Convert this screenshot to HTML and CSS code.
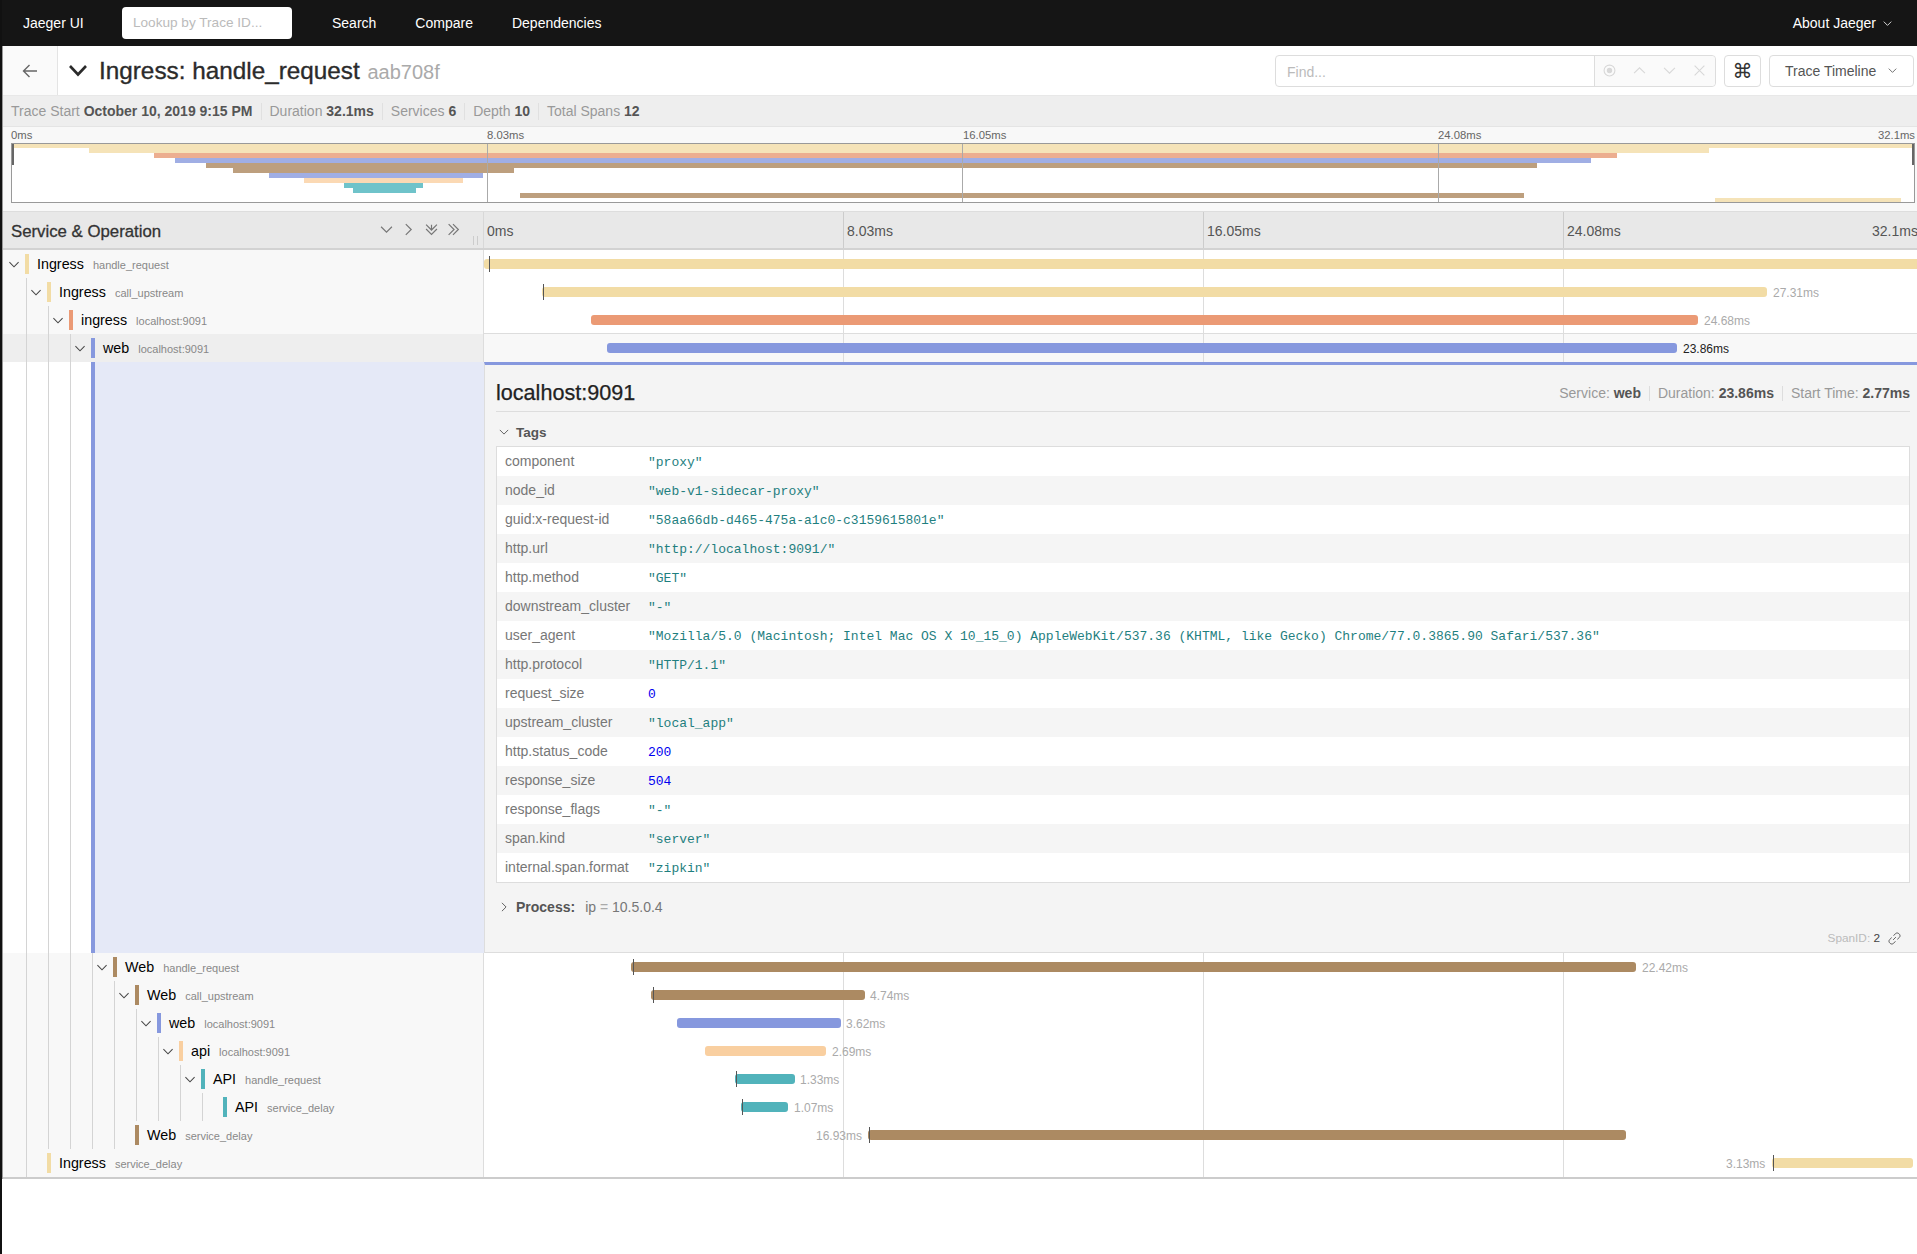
FILE: index.html
```html
<!DOCTYPE html>
<html lang="en">
<head>
<meta charset="utf-8">
<title>Jaeger UI</title>
<link rel="stylesheet" href="styles.css">
</head>
<body>
<svg class="defs" aria-hidden="true">
  <symbol id="down" viewBox="0 0 12 12"><path d="M1 3.500l5 5 5-5"/></symbol>
  <symbol id="right" viewBox="0 0 12 12"><path d="M3.500 1l5 5-5 5"/></symbol>
  <symbol id="up" viewBox="0 0 12 12"><path d="M1 8.500l5-5 5 5"/></symbol>
  <symbol id="ddown" viewBox="0 0 12 12"><path d="M1 1.500l5 5 5-5M1 5.500l5 5 5-5M6 6.500v-5"/></symbol>
  <symbol id="dright" viewBox="0 0 12 12"><path d="M1.500 1l5 5-5 5M5.500 1l5 5-5 5"/></symbol>
</svg>
<div class="app">
  <nav class="nav">
    <span class="brand">Jaeger UI</span>
    <div class="lookup">Lookup by Trace ID...</div>
    <a class="nav-link">Search</a>
    <a class="nav-link">Compare</a>
    <a class="nav-link">Dependencies</a>
    <a class="nav-link about">About Jaeger <svg class="ic ic-xs"><use href="#down"/></svg></a>
  </nav>
  <main class="main">
    <header class="trace-head">
      <div class="back"><svg class="back-ic" viewBox="0 0 16 14"><path d="M15 7H1.500M7.500 1l-6 6 6 6"/></svg></div>
      <svg class="title-chev" viewBox="0 0 20 13"><path d="M2 2l8 8.500 8-8.500"/></svg>
      <h1 class="title">Ingress: handle_request <small class="trace-id">aab708f</small></h1>
      <div class="find">
        <div class="find-input">Find...</div>
        <div class="find-btns">
          <svg class="find-ic" viewBox="0 0 12 12"><circle cx="6" cy="6" r="5"/><circle class="dot" cx="6" cy="6" r="2"/></svg>
          <svg class="find-ic"><use href="#up"/></svg>
          <svg class="find-ic"><use href="#down"/></svg>
          <svg class="find-ic" viewBox="0 0 12 12"><path d="M1.500 1.500l9 9M10.500 1.500l-9 9"/></svg>
        </div>
      </div>
      <div class="cmd">⌘</div>
      <div class="view-select">Trace Timeline <svg class="ic ic-xs"><use href="#down"/></svg></div>
    </header>

    <div class="meta">
      <span class="meta-item">Trace Start <b>October 10, 2019 9:15 PM</b></span>
      <span class="meta-item">Duration <b>32.1ms</b></span>
      <span class="meta-item">Services <b>6</b></span>
      <span class="meta-item">Depth <b>10</b></span>
      <span class="meta-item">Total Spans <b>12</b></span>
    </div>

    <section class="mini">
      <div class="mini-labels"><span>0ms</span><span class="ml1">8.03ms</span><span class="ml2">16.05ms</span><span class="ml3">24.08ms</span><span class="ml4">32.1ms</span></div>
      <div class="mini-canvas">
        <i class="mb m-yellow" style="top:0;left:2px;width:1900px"></i>
        <i class="mb m-yellow" style="top:5px;left:77px;width:1620px"></i>
        <i class="mb m-salmon" style="top:10px;left:142px;width:1463px"></i>
        <i class="mb m-blue" style="top:15px;left:163px;width:1416px"></i>
        <i class="mb m-brown" style="top:20px;left:194px;width:1331px"></i>
        <i class="mb m-brown" style="top:25px;left:221px;width:281px"></i>
        <i class="mb m-blue" style="top:30px;left:257px;width:214px"></i>
        <i class="mb m-peach" style="top:35px;left:292px;width:159px"></i>
        <i class="mb m-teal" style="top:40px;left:332px;width:79px"></i>
        <i class="mb m-teal" style="top:45px;left:341px;width:63px"></i>
        <i class="mb m-brown" style="top:50px;left:508px;width:1004px"></i>
        <i class="mb m-yellow" style="top:55px;left:1703px;width:186px"></i>
        <i class="handle handle-l"></i><i class="handle handle-r"></i>
      </div>
    </section>

    <section class="spans">
      <div class="row head">
        <div class="head-left">
          <span class="head-title">Service &amp; Operation</span>
          <div class="head-tools">
            <svg class="ic ic-tool"><use href="#down"/></svg>
            <svg class="ic ic-tool"><use href="#right"/></svg>
            <svg class="ic ic-tool"><use href="#ddown"/></svg>
            <svg class="ic ic-tool"><use href="#dright"/></svg>
          </div>
          <i class="grip"></i>
        </div>
        <div class="head-time"><span>0ms</span><span>8.03ms</span><span>16.05ms</span><span>24.08ms</span><span class="last">32.1ms</span></div>
      </div>

      <div class="row">
        <div class="name"><svg class="ic toggle"><use href="#down"/></svg><i class="color c-yellow"></i><span class="svc">Ingress</span><span class="op">handle_request</span></div>
        <div class="tl"><i class="bar c-yellow" style="left:0;width:1500px"></i><i class="mark" style="left:5px"></i></div>
      </div>
      <div class="row">
        <div class="name"><i class="guide"></i><svg class="ic toggle"><use href="#down"/></svg><i class="color c-yellow"></i><span class="svc">Ingress</span><span class="op">call_upstream</span></div>
        <div class="tl"><i class="bar c-yellow" style="left:58px;width:1225px"></i><i class="mark" style="left:59px"></i><span class="dur" style="left:1289px">27.31ms</span></div>
      </div>
      <div class="row">
        <div class="name"><i class="guide"></i><i class="guide"></i><svg class="ic toggle"><use href="#down"/></svg><i class="color c-salmon"></i><span class="svc">ingress</span><span class="op">localhost:9091</span></div>
        <div class="tl"><i class="bar c-salmon" style="left:107px;width:1107px"></i><span class="dur" style="left:1220px">24.68ms</span></div>
      </div>
      <div class="row active">
        <div class="name"><i class="guide"></i><i class="guide"></i><i class="guide"></i><svg class="ic toggle"><use href="#down"/></svg><i class="color c-blue"></i><span class="svc">web</span><span class="op">localhost:9091</span></div>
        <div class="tl"><i class="bar c-blue" style="left:123px;width:1070px"></i><span class="dur" style="left:1199px">23.86ms</span></div>
      </div>

      <div class="row detail-row">
        <div class="name detail-left"><i class="guide"></i><i class="guide"></i><i class="guide"></i><i class="no-toggle"></i><i class="detail-fill"></i></div>
        <div class="detail">
          <div class="detail-head">
            <h2 class="detail-title">localhost:9091</h2>
            <div class="detail-meta">
              <span class="dm">Service: <b>web</b></span>
              <span class="dm">Duration: <b>23.86ms</b></span>
              <span class="dm">Start Time: <b>2.77ms</b></span>
            </div>
          </div>
          <div class="tags-head"><svg class="ic ic-sm"><use href="#down"/></svg><b>Tags</b></div>
          <div class="tags">
            <div class="tag"><span class="k">component</span><span class="v">"proxy"</span></div>
            <div class="tag"><span class="k">node_id</span><span class="v">"web-v1-sidecar-proxy"</span></div>
            <div class="tag"><span class="k">guid:x-request-id</span><span class="v">"58aa66db-d465-475a-a1c0-c3159615801e"</span></div>
            <div class="tag"><span class="k">http.url</span><span class="v">"http://localhost:9091/"</span></div>
            <div class="tag"><span class="k">http.method</span><span class="v">"GET"</span></div>
            <div class="tag"><span class="k">downstream_cluster</span><span class="v">"-"</span></div>
            <div class="tag"><span class="k">user_agent</span><span class="v">"Mozilla/5.0 (Macintosh; Intel Mac OS X 10_15_0) AppleWebKit/537.36 (KHTML, like Gecko) Chrome/77.0.3865.90 Safari/537.36"</span></div>
            <div class="tag"><span class="k">http.protocol</span><span class="v">"HTTP/1.1"</span></div>
            <div class="tag"><span class="k">request_size</span><span class="v num">0</span></div>
            <div class="tag"><span class="k">upstream_cluster</span><span class="v">"local_app"</span></div>
            <div class="tag"><span class="k">http.status_code</span><span class="v num">200</span></div>
            <div class="tag"><span class="k">response_size</span><span class="v num">504</span></div>
            <div class="tag"><span class="k">response_flags</span><span class="v">"-"</span></div>
            <div class="tag"><span class="k">span.kind</span><span class="v">"server"</span></div>
            <div class="tag"><span class="k">internal.span.format</span><span class="v">"zipkin"</span></div>
          </div>
          <div class="process"><svg class="ic ic-sm"><use href="#right"/></svg><b>Process:</b><span class="proc-kv">ip<em> = </em>10.5.0.4</span></div>
          <div class="span-id">SpanID: <span class="sid">2</span>
            <svg class="link-ic" viewBox="0 0 14 14"><path d="M5.500 8.500l3-3M6 4l2-2.200c1-1 2.700-1 3.600-.1l.7.700c.9.900.9 2.500-.1 3.500l-2.200 2M8 10l-2 2.200c-1 1-2.700 1-3.600.1l-.7-.7c-.9-.9-.9-2.500.1-3.500L4 6"/></svg>
          </div>
        </div>
      </div>

      <div class="row">
        <div class="name"><i class="guide"></i><i class="guide"></i><i class="guide"></i><i class="guide"></i><svg class="ic toggle"><use href="#down"/></svg><i class="color c-brown"></i><span class="svc">Web</span><span class="op">handle_request</span></div>
        <div class="tl"><i class="bar c-brown" style="left:147px;width:1005px"></i><i class="mark" style="left:149px"></i><span class="dur" style="left:1158px">22.42ms</span></div>
      </div>
      <div class="row">
        <div class="name"><i class="guide"></i><i class="guide"></i><i class="guide"></i><i class="guide"></i><i class="guide"></i><svg class="ic toggle"><use href="#down"/></svg><i class="color c-brown"></i><span class="svc">Web</span><span class="op">call_upstream</span></div>
        <div class="tl"><i class="bar c-brown" style="left:167px;width:214px"></i><i class="mark" style="left:169px"></i><span class="dur" style="left:386px">4.74ms</span></div>
      </div>
      <div class="row">
        <div class="name"><i class="guide"></i><i class="guide"></i><i class="guide"></i><i class="guide"></i><i class="guide"></i><i class="guide"></i><svg class="ic toggle"><use href="#down"/></svg><i class="color c-blue"></i><span class="svc">web</span><span class="op">localhost:9091</span></div>
        <div class="tl"><i class="bar c-blue" style="left:193px;width:164px"></i><span class="dur" style="left:362px">3.62ms</span></div>
      </div>
      <div class="row">
        <div class="name"><i class="guide"></i><i class="guide"></i><i class="guide"></i><i class="guide"></i><i class="guide"></i><i class="guide"></i><i class="guide"></i><svg class="ic toggle"><use href="#down"/></svg><i class="color c-peach"></i><span class="svc">api</span><span class="op">localhost:9091</span></div>
        <div class="tl"><i class="bar c-peach" style="left:221px;width:121px"></i><span class="dur" style="left:348px">2.69ms</span></div>
      </div>
      <div class="row">
        <div class="name"><i class="guide"></i><i class="guide"></i><i class="guide"></i><i class="guide"></i><i class="guide"></i><i class="guide"></i><i class="guide"></i><i class="guide"></i><svg class="ic toggle"><use href="#down"/></svg><i class="color c-teal"></i><span class="svc">API</span><span class="op">handle_request</span></div>
        <div class="tl"><i class="bar c-teal" style="left:251px;width:60px"></i><i class="mark" style="left:252px"></i><span class="dur" style="left:316px">1.33ms</span></div>
      </div>
      <div class="row">
        <div class="name"><i class="guide"></i><i class="guide"></i><i class="guide"></i><i class="guide"></i><i class="guide"></i><i class="guide"></i><i class="guide"></i><i class="guide"></i><i class="guide"></i><i class="no-toggle"></i><i class="color c-teal"></i><span class="svc">API</span><span class="op">service_delay</span></div>
        <div class="tl"><i class="bar c-teal" style="left:257px;width:47px"></i><i class="mark" style="left:258px"></i><span class="dur" style="left:310px">1.07ms</span></div>
      </div>
      <div class="row">
        <div class="name"><i class="guide"></i><i class="guide"></i><i class="guide"></i><i class="guide"></i><i class="guide"></i><i class="no-toggle"></i><i class="color c-brown"></i><span class="svc">Web</span><span class="op">service_delay</span></div>
        <div class="tl"><i class="bar c-brown" style="left:384px;width:758px"></i><i class="mark" style="left:385px"></i><span class="dur" style="left:332px">16.93ms</span></div>
      </div>
      <div class="row last-row">
        <div class="name"><i class="guide"></i><i class="no-toggle"></i><i class="color c-yellow"></i><span class="svc">Ingress</span><span class="op">service_delay</span></div>
        <div class="tl"><i class="bar c-yellow" style="left:1288px;width:141px"></i><i class="mark" style="left:1289px"></i><span class="dur" style="left:1242px">3.13ms</span></div>
      </div>
    </section>
  </main>
</div>
</body>
</html>
```
FILE: styles.css
```css
* { box-sizing: border-box; }
html, body { margin: 0; padding: 0; }
body {
  width: 1917px;
  height: 1254px;
  overflow: hidden;
  background: #fff;
  color: #333;
  font-family: "Liberation Sans", Arial, sans-serif;
  font-size: 14px;
}
.defs { position: absolute; width: 0; height: 0; }
svg { fill: none; stroke: currentColor; flex: none; }
i { display: block; font-style: normal; }

.app { border-left: 2px solid #111; height: 1254px; }

/* top nav */
.nav {
  display: flex;
  align-items: center;
  height: 46px;
  background: #151515;
  color: #fff;
  padding-left: 21px;
}
.brand { width: 99px; }
.lookup {
  width: 170px;
  height: 32px;
  margin-right: 40px;
  padding-left: 11px;
  line-height: 32px;
  font-size: 13.600px;
  background: #fff;
  border-radius: 4px;
  color: #bbb;
}
.nav-link { margin-right: 39px; }
.nav-link.about { margin-left: auto; margin-right: 25px; display: flex; align-items: center; gap: 7px; }

.main { border-left: 1px solid #999; }

/* trace header */
.trace-head {
  display: flex;
  align-items: center;
  height: 50px;
  border-bottom: 1px solid #e8e8e8;
  padding-right: 3px;
}
.back {
  width: 55px;
  height: 100%;
  display: flex;
  align-items: center;
  justify-content: center;
  background: #fafafa;
  border-right: 1px solid #e4e4e4;
  color: #666;
}
.back-ic { width: 16px; height: 14px; stroke-width: 1.400; }
.title-chev { width: 20px; height: 13px; margin-left: 10px; stroke: #2b2b2b; stroke-width: 2.600; }
.title {
  margin: 0 0 0 11px;
  font-size: 24.300px;
  font-weight: 400;
  color: #2b2b2b;
  -webkit-text-stroke: 0.350px #2b2b2b;
  white-space: nowrap;
}
.trace-id { font-size: 20px; color: #aaa; -webkit-text-stroke: 0; margin-left: 1px; }
.find { margin-left: auto; display: flex; height: 32px; border: 1px solid #ddd; border-radius: 4px; width: 441px; }
.find-input { width: 319px; padding-left: 11px; line-height: 32px; color: #bbb; border-right: 1px solid #ddd; }
.find-btns { flex: 1; display: flex; align-items: center; justify-content: space-between; padding: 0 9px 0 8px; background: #fafafa; border-radius: 0 4px 4px 0; color: #d8d8d8; }
.find-ic { width: 13px; height: 13px; }
.dot { fill: currentColor; }
.cmd {
  width: 37px;
  height: 32px;
  margin-left: 8px;
  border: 1px solid #ddd;
  border-radius: 4px;
  text-align: center;
  font: 20px/30px "DejaVu Sans", sans-serif;
  color: #333;
}
.view-select {
  width: 145px;
  height: 32px;
  margin-left: 8px;
  padding-left: 15px;
  display: flex;
  align-items: center;
  gap: 12px;
  border: 1px solid #ddd;
  border-radius: 4px;
  color: #555;
}
.ic { width: 12px; height: 12px; stroke-width: 1.100; }
.ic-xs { width: 9px; height: 9px; color: inherit; }

/* meta bar */
.meta {
  display: flex;
  align-items: center;
  height: 31px;
  padding-left: 8px;
  background: #eee;
  border-bottom: 1px solid #e4e4e4;
  color: #999;
  font-size: 14px;
}
.meta-item { padding-right: 8px; margin-right: 8px; border-right: 1px solid #e0e0e0; line-height: 17px; }
.meta-item:last-child { border: 0; }
.meta b { color: #555; }

/* minimap */
.mini {
  height: 85px;
  background: #f8f8f8;
  border-bottom: 1px solid #ddd;
  padding: 0 0 0 8px;
}
.mini-labels { position: relative; width: 1903px; height: 16px; font-size: 11.300px; line-height: 16px; color: #666; }
.mini-labels span { position: absolute; left: 0; top: 0; }
.mini-labels .ml1 { left: 476px; }
.mini-labels .ml2 { left: 952px; }
.mini-labels .ml3 { left: 1427px; }
.mini-labels .ml4 { left: auto; right: -1px; }
.mini-canvas {
  position: relative;
  width: 1904px;
  height: 60px;
  background: #fff;
  border: 1px solid #999;
  overflow: hidden;
}
.mini-canvas::after {
  content: "";
  position: absolute;
  inset: 0;
  background:
    linear-gradient(#aaa, #aaa) 475px 0 / 1px 100% no-repeat,
    linear-gradient(#aaa, #aaa) 950px 0 / 1px 100% no-repeat,
    linear-gradient(#aaa, #aaa) 1426px 0 / 1px 100% no-repeat;
}
.mb { position: absolute; height: 5px; margin-top: -1px; }
.m-yellow { background: #f5e3b8; }
.m-salmon { background: #ecae90; }
.m-blue { background: #a0aee4; }
.m-brown { background: #bd9f7e; }
.m-peach { background: #fbd9b4; }
.m-teal { background: #6fc3ca; }
.handle { position: absolute; top: 0; width: 3px; height: 21px; background: #666; z-index: 1; }
.handle-l { left: -1px; }
.handle-r { right: -1px; }

/* span table */
.spans { border-bottom: 2px solid #ccc; }
.row { display: grid; grid-template-columns: 481px 1fr; height: 28px; }
.head { height: 38px; background: #e8e8e8; border-bottom: 2px solid #d2d2d2; }
.head-left {
  position: relative;
  display: flex;
  align-items: center;
  padding-left: 8px;
  padding-top: 4px;
  border-right: 1px solid #d8d8d8;
}
.head-title { font-size: 16.800px; color: #333; -webkit-text-stroke: 0.300px #333; white-space: nowrap; }
.head-tools { margin-left: auto; margin-right: 23px; margin-top: -5px; display: flex; gap: 9.400px; color: #777; }
.ic-tool { width: 13px; height: 13px; }
.grip { position: absolute; right: 5px; bottom: 3px; width: 5px; height: 9px; border-left: 1px solid #ccc; border-right: 1px solid #ccc; }
.head-time {
  display: grid;
  grid-template-columns: 360px 360px 360px 308px auto;
  color: #555;
  line-height: 38px;
  width: 1433px;
  overflow: hidden;
  background:
    linear-gradient(#ccc, #ccc) 359px 0 / 1px 100% no-repeat,
    linear-gradient(#ccc, #ccc) 719px 0 / 1px 100% no-repeat,
    linear-gradient(#ccc, #ccc) 1079px 0 / 1px 100% no-repeat;
}
.head-time span { padding-left: 3px; }
.head-time .last { padding-left: 0; white-space: nowrap; }

.name {
  display: flex;
  align-items: center;
  padding-left: 2px;
  height: 100%;
  background: #f8f8f8;
  border-right: 1px solid #ddd;
  white-space: nowrap;
}
.guide { width: 22px; height: 100%; border-right: 1px solid #d4d4d4; flex: none; }
.toggle { width: 20px; height: 11px; padding-right: 2px; color: #444; }
.no-toggle { width: 20px; flex: none; }
.color { width: 4px; height: 20px; margin-right: 8px; flex: none; }
.svc { font-size: 14.300px; color: #000; margin-right: 9px; line-height: 26px; }
.op { font-size: 11px; color: #888; padding-top: 2px; }

.tl {
  position: relative;
  overflow: hidden;
  height: 28px;
  background-color: #fff;
  background-image: linear-gradient(#ddd, #ddd), linear-gradient(#ddd, #ddd), linear-gradient(#ddd, #ddd);
  background-size: 1px 100%;
  background-repeat: no-repeat;
  background-position: 359px 0, 719px 0, 1079px 0;
}
.bar { position: absolute; top: 9px; height: 10px; border-radius: 3px; }
.mark { position: absolute; top: 6px; width: 1px; height: 16px; background: #555; }
.dur { position: absolute; top: 0; font-size: 12px; line-height: 30px; color: #aaa; white-space: nowrap; }

.c-yellow { background: #f2dca5; }
.c-salmon { background: #eb9a75; }
.c-blue { background: #8698de; }
.c-brown { background: #ac8a62; }
.c-peach { background: #f9cfa0; }
.c-teal { background: #51b3bb; }

.active .name { background: #eee; }
.active .tl { background-color: #f8f8f8; box-shadow: 0 -1px 0 #ddd; }
.active .dur { color: #222; }

/* detail */
.detail-row { height: 591px; }
.detail-left { background: #fff; align-items: stretch; border-right: 0; }
.detail-fill { flex: 1; background: #e5e9f7; border-left: 4px solid #8698de; }
.detail {
  background: #f4f4f4;
  border-top: 3px solid #8698de;
  border-bottom: 1px solid #ddd;
  border-left: 1px solid #ddd;
  padding: 0 7px 0 11px;
  overflow: hidden;
  width: 1433px;
}
.detail-head {
  display: flex;
  align-items: center;
  justify-content: space-between;
  height: 47px;
  padding-top: 10px;
  border-bottom: 1px solid #ddd;
}
.detail-title { margin: 0; font-size: 21.600px; font-weight: 400; color: #222; -webkit-text-stroke: 0.250px #222; }
.detail-meta { display: flex; color: #999; font-size: 14px; }
.dm { padding: 0 8px; border-right: 1px solid #ddd; line-height: 15px; }
.dm:last-child { border: 0; padding-right: 0; }
.dm b { color: #555; }
.tags-head { display: flex; align-items: center; height: 34px; padding-top: 6px; padding-left: 3px; color: #555; }
.ic-sm { width: 10px; height: 10px; margin-right: 7px; color: #555; }
.tags-head b { font-size: 13.500px; }
.tags { border: 1px solid #ddd; background: #fff; }
.tag { display: flex; align-items: center; height: 29px; padding-left: 8px; }
.tag:nth-child(even) { background: #f5f5f5; }
.k { width: 143px; color: #777; padding-bottom: 1px; white-space: nowrap; flex: none; }
.v { font-family: "Liberation Mono", "Courier New", monospace; font-size: 13px; color: #1f7f7f; white-space: nowrap; padding-top: 2px; }
.v.num { color: #0000f0; }
.process { display: flex; align-items: center; height: 20px; margin-top: 14px; padding-left: 3px; color: #555; }
.process b { font-size: 14px; margin-right: 10px; }
.proc-kv { color: #777; }
.proc-kv em { font-style: normal; color: #aaa; }
.span-id { display: flex; align-items: center; justify-content: flex-end; height: 20px; margin-top: 11px; padding-right: 9px; color: #bbb; font-size: 11.800px; white-space: pre; }
.sid { color: #444; margin-right: 8px; }
.link-ic { width: 13px; height: 13px; color: #555; stroke-width: 1; }
```
